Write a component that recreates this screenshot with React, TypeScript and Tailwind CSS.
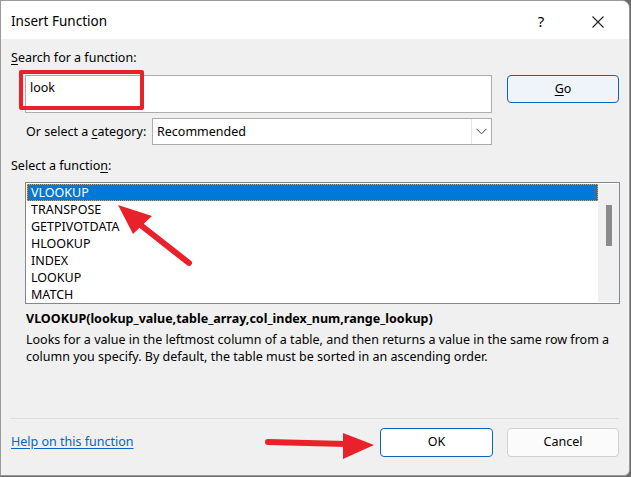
import React from "react";

const functions = ["VLOOKUP", "TRANSPOSE", "GETPIVOTDATA", "HLOOKUP", "INDEX", "LOOKUP", "MATCH"];

export default function App() {
  return (
    <div className="relative w-[631px] h-[477px] bg-[#6b6b6b] font-['Noto_Sans',sans-serif] text-[12.5px] text-black overflow-hidden">
      <div className="absolute inset-0 right-[1px] bottom-[1px] flex flex-col border border-[#9a9a9a] rounded-tr-[8px] rounded-br-[6px] overflow-hidden bg-[#f0f0f0]">
        {/* title bar */}
        <div className="h-[38px] bg-white flex items-center pl-[10px] pt-[3px] shrink-0">
          <span className="text-[13.5px] flex-1 leading-none">Insert Function</span>
          <span className="w-[40px] text-center text-[15px] leading-none mr-[17px]">?</span>
          <span className="w-[40px] flex justify-center mr-[11px]">
            <svg width="12" height="12" viewBox="0 0 12 12">
              <path d="M0.5 0.5L11.5 11.5M11.5 0.5L0.5 11.5" stroke="#222" strokeWidth="1.1" />
            </svg>
          </span>
        </div>

        {/* body */}
        <div className="flex-1 flex flex-col px-[10px] pt-[9px]">
          <div className="leading-[20px]">
            <span className="underline underline-offset-2">S</span>earch for a function:
          </div>

          <div className="flex items-start mt-[7px] pl-[14px]">
            <div className="w-[467px] h-[38px] bg-white border border-[#adadad] px-[4px] pt-[2px] leading-[20px]">look</div>
            <button className="ml-[15px] w-[112px] h-[28px] bg-[#eef4fa] border border-[#0f64b4] rounded-[4px] leading-none">
              <span className="underline underline-offset-2">G</span>o
            </button>
          </div>

          <div className="flex items-center mt-[5px] pl-[15px]">
            <span className="w-[126px] whitespace-nowrap leading-[20px]">
              Or select a <span className="underline underline-offset-2">c</span>ategory:
            </span>
            <div className="w-[340px] h-[27px] bg-white border border-[#adadad] flex items-center">
              <span className="flex-1 pl-[4px] leading-[20px]">Recommended</span>
              <div className="w-[20px] h-full border-l border-[#e6e6e6] flex items-center justify-center">
                <svg width="11" height="7" viewBox="0 0 11 7">
                  <path d="M0.5 0.8L5.5 5.8L10.5 0.8" fill="none" stroke="#444" strokeWidth="1" />
                </svg>
              </div>
            </div>
          </div>

          <div className="leading-[20px] mt-[11px]">
            Select a functio<span className="underline underline-offset-2">n</span>:
          </div>

          <div className="ml-[14px] mt-[6px] w-[595px] h-[122px] bg-white border border-[#828790] flex p-[1px] pr-0">
            <div className="flex-1 flex flex-col">
              {functions.map((f, i) => (
                <div
                  key={f}
                  className={
                    i === 0
                      ? "h-[17px] leading-[15px] pl-[3px] bg-[#0078d7] text-white border border-dotted border-[#f0a030]"
                      : "h-[17px] leading-[17px] pl-[4px]"
                  }
                >
                  {f}
                </div>
              ))}
            </div>
            <div className="w-[21px] h-full bg-[#f0f0f0] flex justify-center pt-[21px]">
              <div className="w-[6px] h-[41px] bg-[#8a8a8a]" />
            </div>
          </div>

          <div className="ml-[15px] mt-[5px] font-bold leading-[20px]">
            VLOOKUP(lookup_value,table_array,col_index_num,range_lookup)
          </div>
          <div className="ml-[15px] mt-[2px] leading-[17px] pr-[4px]">
            Looks for a value in the leftmost column of a table, and then returns a value in the same row from a column you specify. By default, the table must be sorted in an ascending order.
          </div>

          <div className="flex-1" />
          <div className="h-[1px] bg-[#dcdcdc]" />
          <div className="flex items-center h-[56px] pb-[10px]">
            <a className="flex-1 text-[#0b62c8] underline underline-offset-2 leading-[20px]">Help on this function</a>
            <button className="w-[113px] h-[29px] bg-white border border-[#0f64b4] rounded-[4px]">OK</button>
            <button className="ml-[14px] w-[112px] h-[29px] bg-[#fbfbfb] border border-[#d0d0d0] rounded-[4px]">Cancel</button>
          </div>
        </div>
      </div>

      {/* annotations */}
      <div className="absolute left-[19px] top-[70px] w-[125px] h-[40px] border-[4px] border-[#e8212b] rounded-[2px]" />
      <svg className="absolute inset-0 pointer-events-none" width="631" height="477" viewBox="0 0 631 477">
        <path d="M189 263L138 223" stroke="#e8212b" strokeWidth="6" strokeLinecap="round" />
        <polygon points="118,205 152,216 133,234" fill="#e8212b" />
        <path d="M268 442L346 444" stroke="#e8212b" strokeWidth="6" strokeLinecap="round" />
        <polygon points="343,433 374,445 343,459" fill="#e8212b" />
      </svg>
    </div>
  );
}
